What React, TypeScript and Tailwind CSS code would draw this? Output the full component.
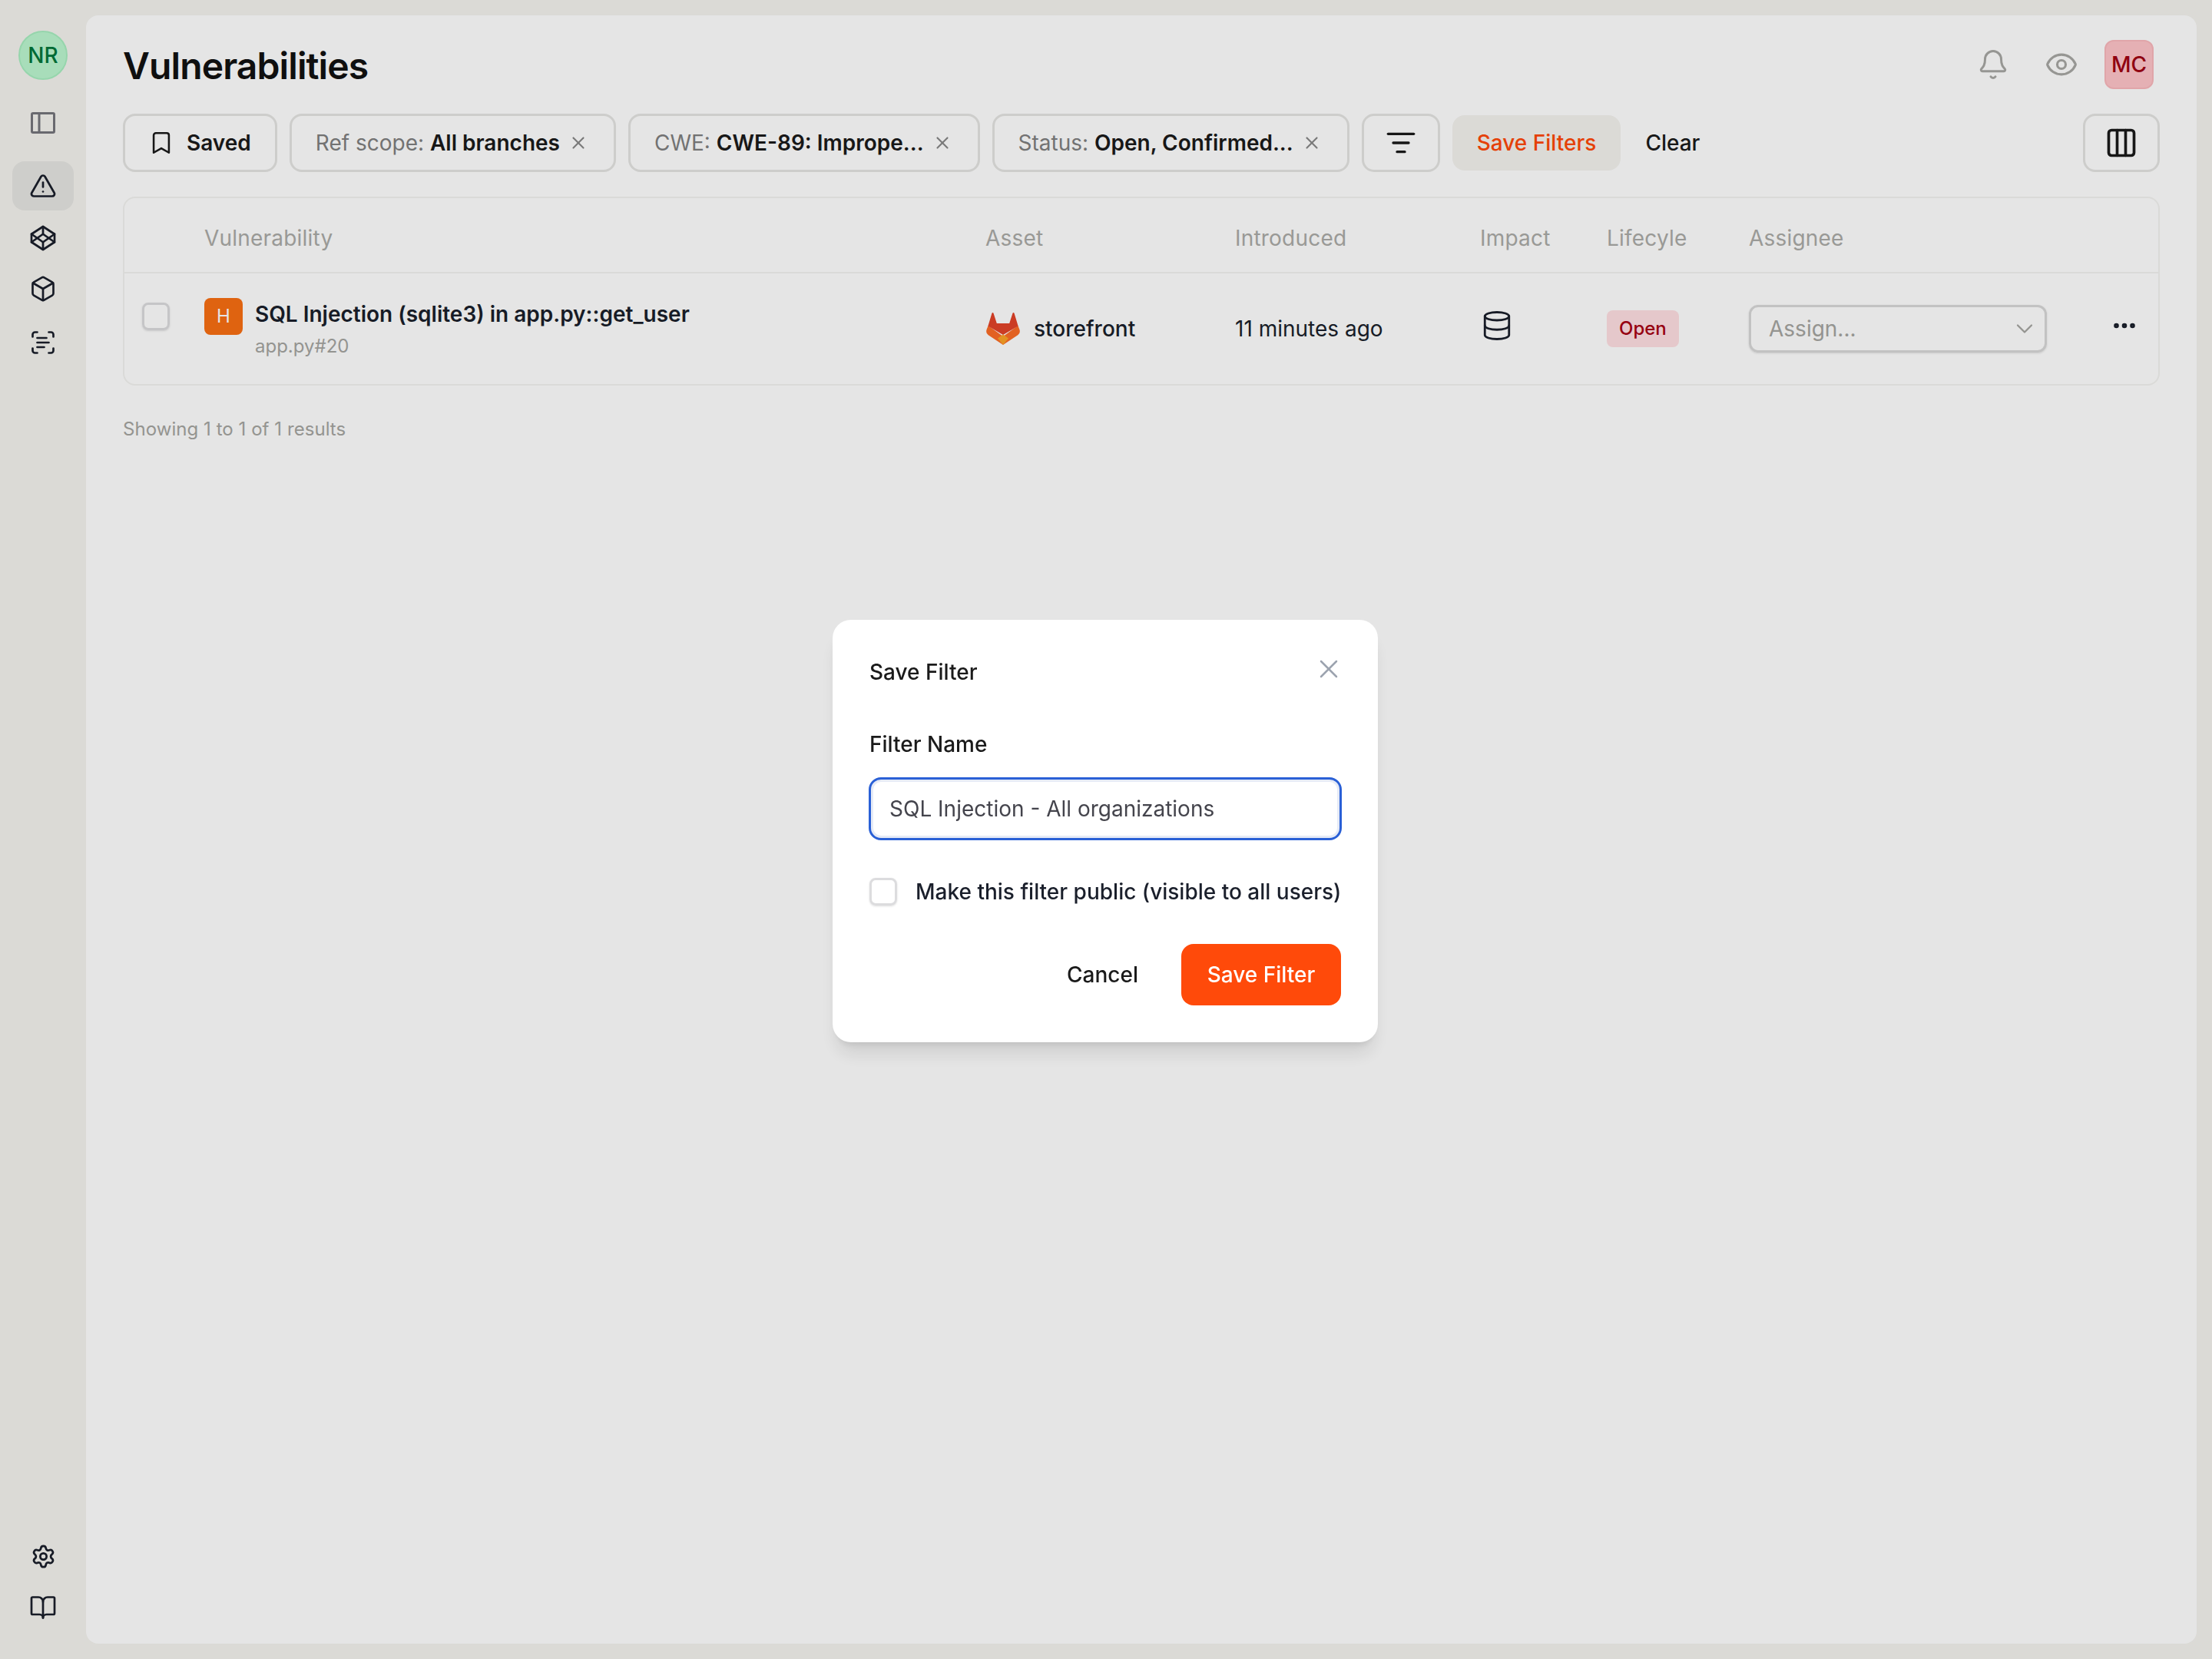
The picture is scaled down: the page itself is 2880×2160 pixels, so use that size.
import {
  Bell,
  BookOpen,
  Bookmark,
  Box,
  ChevronDown,
  Codepen,
  Columns3,
  Database,
  Ellipsis,
  Eye,
  ListFilter,
  ScanText,
  Settings,
  TriangleAlert,
  X,
} from "lucide-react";

function GitlabLogo() {
  return (
    <svg width="44" height="42" viewBox="0 0 44 42" className="shrink-0">
      {/* wings */}
      <path
        fill="#fc6d26"
        d="M2.6 17 L22 31 L41.4 17 L43.4 22 C44.4 24.8 43.6 27.4 41.2 29.2 L22 42 L2.8 29.2 C.4 27.4 -.4 24.8 .6 22 Z"
      />
      {/* head and ears */}
      <path
        fill="#e24329"
        d="M7.4 1 C7.8 -.3 9.2 -.3 9.6 1 L13.8 14 H30.2 L34.4 1 C34.8 -.3 36.2 -.3 36.6 1 L41.6 17.5 L22 29 L2.4 17.5 Z"
      />
      {/* chin */}
      <path fill="#fca326" d="M15 33.4 L22 28.4 L29 33.4 L22 42 Z" />
    </svg>
  );
}

function FilterChip({ label, value }: { label: string; value: string }) {
  return (
    <div className="flex h-[76px] items-center rounded-2xl border-[3px] border-[#e5e5e3] pl-[31px] pr-[33px] text-[28px]">
      <span className="text-[#7f7f7f]">{label}:&nbsp;</span>
      <span className="font-semibold text-[#1a1a1a]">{value}</span>
      <X size={26} strokeWidth={2} className="ml-[11px] text-[#888888]" />
    </div>
  );
}

export default function App() {
  return (
    <div
      className="relative flex h-screen w-full bg-[#f4f3ef] text-[28px] text-[#1a1f2b]"
      style={{ fontFamily: "Inter, 'Liberation Sans', sans-serif" }}
    >
      {/* Sidebar */}
      <aside className="flex w-[112px] shrink-0 flex-col items-center pb-[35px] pt-10">
        <div className="flex h-16 w-16 items-center justify-center rounded-full border-2 border-[#a8eec0] bg-[#bbf7d0] text-[28px] font-medium text-[#00773a]">
          NR
        </div>
        <svg
          width="32"
          height="28"
          viewBox="0 0 32 28"
          fill="none"
          stroke="#75757c"
          strokeWidth="3"
          className="mt-[42px]"
        >
          <rect x="1.5" y="1.5" width="29" height="25" rx="1.5" />
          <path d="M11 1.5v25" />
        </svg>
        <nav className="mt-9 flex flex-col gap-1">
          <div className="flex h-16 w-20 items-center justify-center rounded-2xl bg-[#e6e6e2]">
            <TriangleAlert size={36} strokeWidth={1.8} />
          </div>
          <div className="flex h-16 w-20 items-center justify-center">
            <Codepen size={36} strokeWidth={1.8} />
          </div>
          <div className="-mt-[2px] flex h-16 w-20 items-center justify-center">
            <Box size={36} strokeWidth={1.8} />
          </div>
          <div className="mt-[2px] flex h-16 w-20 items-center justify-center">
            <ScanText size={36} strokeWidth={1.8} />
          </div>
        </nav>
        <div className="mt-auto flex flex-col gap-[3px]">
          <div className="flex h-16 w-20 items-center justify-center">
            <Settings size={33} strokeWidth={2} />
          </div>
          <div className="flex h-16 w-20 items-center justify-center">
            <BookOpen size={36} strokeWidth={1.8} />
          </div>
        </div>
      </aside>

      {/* Main */}
      <main className="my-5 mr-5 flex-1 rounded-2xl bg-white px-12 pt-8">
        <header className="flex h-16 items-center justify-between">
          <h1 className="pt-[3px] text-[48px] font-semibold tracking-[-0.9px] text-[#111111]">
            Vulnerabilities
          </h1>
          <div className="flex items-center pr-2">
            <Bell size={42} strokeWidth={1.7} className="text-[#a8a8a4]" />
            <Eye size={44} strokeWidth={1.7} className="ml-[46px] text-[#a8a8a4]" />
            <div className="ml-[34px] flex h-16 w-16 items-center justify-center rounded-xl border-2 border-[#fab8bd] bg-[#ffc4c9] font-medium text-[#a00012]">
              MC
            </div>
          </div>
        </header>

        <div className="mt-8 flex items-center gap-4">
          <div className="flex h-[76px] items-center gap-4 rounded-2xl border-[3px] border-[#e5e5e3] pl-[30px] pr-[31px] font-semibold text-[#1a1a1a]">
            <Bookmark size={34} strokeWidth={1.8} />
            Saved
          </div>
          <FilterChip label="Ref scope" value="All branches" />
          <FilterChip label="CWE" value="CWE-89: Imprope..." />
          <FilterChip label="Status" value="Open, Confirmed..." />
          <div className="flex h-[76px] w-[102px] items-center justify-center rounded-2xl border-[3px] border-[#e5e5e3] text-[#1a1a1a]">
            <ListFilter size={40} strokeWidth={2} />
          </div>
          <div className="flex h-[72px] items-center rounded-2xl bg-[#f4f3ef] px-[32px] font-medium text-[#ff4808]">
            Save Filters
          </div>
          <div className="ml-4 font-medium text-[#1a1a1a]">Clear</div>
          <div className="ml-auto flex h-[76px] w-[100px] items-center justify-center rounded-2xl border-[3px] border-[#e5e5e3] text-[#1a1a1a]">
            <Columns3 size={44} strokeWidth={2} />
          </div>
        </div>

        {/* Table */}
        <div className="mt-8 rounded-2xl border-2 border-[#f3f3f1]">
          <div className="grid h-[98px] grid-cols-[104px_1017px_325px_319px_165px_185px_1fr] items-center border-b-2 border-[#f3f3f1] pt-[8px] tracking-[0.2px] text-[#ababa7]">
            <div />
            <div>Vulnerability</div>
            <div>Asset</div>
            <div>Introduced</div>
            <div>Impact</div>
            <div>Lifecyle</div>
            <div>Assignee</div>
          </div>
          <div className="grid h-[144px] grid-cols-[104px_1017px_325px_319px_165px_185px_1fr] items-center">
            <div className="pb-[33px] pl-[23px]">
              <div className="h-9 w-9 rounded-lg border-[3px] border-[#dcdcde] shadow-sm" />
            </div>
            <div className="flex gap-4 self-start pt-[32px]">
              <div className="flex h-12 w-[50px] shrink-0 items-center justify-center rounded-lg bg-[#f96f12] text-[24px] text-white">
                H
              </div>
              <div>
                <div className="mt-[1px] font-semibold leading-[40px]">
                  SQL Injection (sqlite3) in app.py::get_user
                </div>
                <div className="mt-[2px] text-[24px] leading-[40px] text-[#a5a5a1]">app.py#20</div>
              </div>
            </div>
            <div className="flex items-center gap-[18px] pl-[1px] font-medium">
              <GitlabLogo />
              storefront
            </div>
            <div>11 minutes ago</div>
            <div className="pb-2">
              <Database size={42} strokeWidth={1.6} className="ml-[1px]" />
            </div>
            <div>
              <span className="inline-flex h-12 items-center rounded-lg bg-[#ffdfe2] px-4 text-[24px] font-medium text-[#a80013]">
                Open
              </span>
            </div>
            <div className="flex items-center">
              <div className="flex h-[62px] w-[388px] items-center justify-between rounded-xl border-[3px] border-[#d8d8d8] pl-[23px] pr-2 text-[#a5a5a1] shadow-sm">
                Assign...
                <ChevronDown size={36} strokeWidth={1.5} />
              </div>
              <Ellipsis size={36} strokeWidth={2.4} className="ml-[83px] mb-2 text-[#1a1f2b]" />
            </div>
          </div>
        </div>

        <div className="mt-[39px] text-[24px] tracking-[0.05px] text-[#a5a5a1]">
          Showing 1 to 1 of 1 results
        </div>
      </main>

      {/* Save filter dialog */}
      <div className="fixed inset-0 flex items-center justify-center bg-black/10">
        <div className="mr-[2px] mt-[3px] w-[710px] rounded-3xl bg-white px-12 pb-12 pt-[41px] shadow-xl">
          <div className="flex items-start justify-between">
            <h2 className="font-medium leading-[54px] text-[#1a1a1a]">Save Filter</h2>
            <X size={40} strokeWidth={1.5} className="-mr-[4px] mt-[3px] text-[#9ca3af]" />
          </div>
          <label className="mt-[47px] block font-medium leading-[40px] text-[#1a1a1a]">
            Filter Name
          </label>
          <div className="-mx-[1px] mt-[23px] flex h-[82px] items-center rounded-2xl border-[3px] border-[#2a60d6] px-6 text-[#44444c] shadow-[inset_0_0_0_3px_#e6ebf6]">
            SQL Injection - All organizations
          </div>
          <div className="mt-[46px] flex items-center gap-[24px]">
            <div className="h-9 w-9 shrink-0 rounded-lg border-[3px] border-[#dcdcde] shadow-sm" />
            <span className="whitespace-nowrap font-medium text-[#1a1f2b]">
              Make this filter public (visible to all users)
            </span>
          </div>
          <div className="mt-[47px] flex items-center justify-end gap-14">
            <span className="font-medium text-[#1a1a1a]">Cancel</span>
            <div className="flex h-20 w-[208px] items-center justify-center rounded-2xl bg-[#ff4a0a] font-medium text-white">
              Save Filter
            </div>
          </div>
        </div>
      </div>
    </div>
  );
}
